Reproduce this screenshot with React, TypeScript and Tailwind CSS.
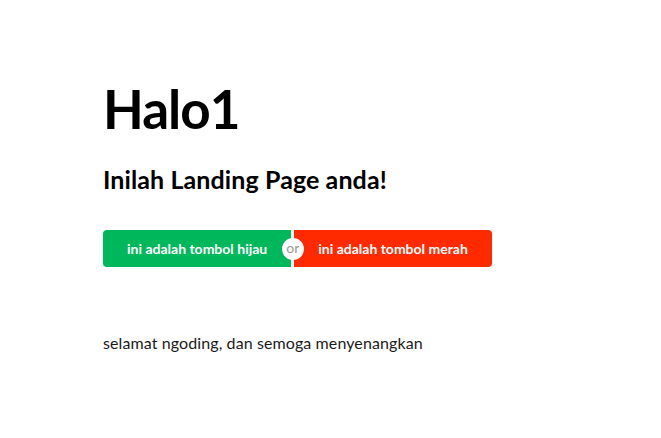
export default function App() {
  return (
    <div className="min-h-screen bg-white font-['Lato',sans-serif] text-black">
      <div className="px-[103px] pt-[76px]">
        <h1 className="text-[53px] font-bold leading-[66px] tracking-[-1px]">Halo1</h1>
        <h2 className="mt-[21px] text-[25px] font-bold leading-[32px] tracking-[0.1px]">Inilah Landing Page anda!</h2>

        <div className="mt-[35px] flex">
          <button className="h-[37px] rounded-l-[4px] bg-[#00b85c] px-[24px] text-[14px] font-bold text-white">
            ini adalah tombol hijau
          </button>
          <div className="relative z-10 w-[3px] bg-[#f2f2f2]">
            <span className="absolute left-1/2 top-1/2 flex h-[22px] w-[22px] -translate-x-1/2 -translate-y-1/2 items-center justify-center rounded-full bg-white pb-[2px] text-[14px] leading-none text-[#999]">
              or
            </span>
          </div>
          <button className="h-[37px] rounded-r-[4px] bg-[#ff2a00] px-[24px] text-[14px] font-bold text-white">
            ini adalah tombol merah
          </button>
        </div>

        <p className="mt-[66px] text-[16px] leading-[20px] tracking-[0.1px] text-[#1a1a1a]">
          selamat ngoding, dan semoga menyenangkan
        </p>
      </div>
    </div>
  );
}
